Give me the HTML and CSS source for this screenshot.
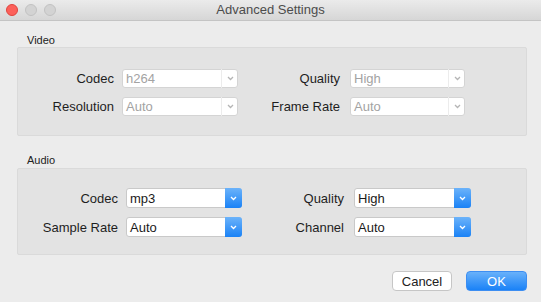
FILE: index.html
```html
<!DOCTYPE html>
<html lang="en">
<head>
    <meta charset="UTF-8">
    <title>Advanced Settings</title>
    <link rel="stylesheet" href="styles.css">
</head>
<body>
    <div class="window">
        <header class="titlebar">
            <div class="lights">
                <span class="light close"></span>
                <span class="light off"></span>
                <span class="light off"></span>
            </div>
            <h1>Advanced Settings</h1>
            <div></div>
        </header>

        <main class="content">
            <h2 class="section-title">Video</h2>
            <div class="group video">
                <label>Codec</label>
                <div class="select disabled"><span>h264</span><i class="arrow"><svg width="7" height="5" viewBox="0 0 7 5"><path d="M1 1l2.5 2.5L6 1"/></svg></i></div>
                <label>Quality</label>
                <div class="select disabled"><span>High</span><i class="arrow"><svg width="7" height="5" viewBox="0 0 7 5"><path d="M1 1l2.5 2.5L6 1"/></svg></i></div>
                <label>Resolution</label>
                <div class="select disabled"><span>Auto</span><i class="arrow"><svg width="7" height="5" viewBox="0 0 7 5"><path d="M1 1l2.5 2.5L6 1"/></svg></i></div>
                <label>Frame Rate</label>
                <div class="select disabled"><span>Auto</span><i class="arrow"><svg width="7" height="5" viewBox="0 0 7 5"><path d="M1 1l2.5 2.5L6 1"/></svg></i></div>
            </div>

            <h2 class="section-title audio-title">Audio</h2>
            <div class="group audio">
                <label>Codec</label>
                <div class="select"><span>mp3</span><i class="arrow"><svg width="7" height="5" viewBox="0 0 7 5"><path d="M1 1l2.5 2.5L6 1"/></svg></i></div>
                <label>Quality</label>
                <div class="select"><span>High</span><i class="arrow"><svg width="7" height="5" viewBox="0 0 7 5"><path d="M1 1l2.5 2.5L6 1"/></svg></i></div>
                <label>Sample Rate</label>
                <div class="select"><span>Auto</span><i class="arrow"><svg width="7" height="5" viewBox="0 0 7 5"><path d="M1 1l2.5 2.5L6 1"/></svg></i></div>
                <label>Channel</label>
                <div class="select"><span>Auto</span><i class="arrow"><svg width="7" height="5" viewBox="0 0 7 5"><path d="M1 1l2.5 2.5L6 1"/></svg></i></div>
            </div>

            <div class="actions">
                <button class="btn">Cancel</button>
                <button class="btn btn-primary">OK</button>
            </div>
        </main>
    </div>
</body>
</html>
```

FILE: styles.css
```css
* {
    margin: 0;
    padding: 0;
    box-sizing: border-box;
    font-family: 'Helvetica Neue', 'Liberation Sans', Arial, sans-serif;
}

body {
    background-color: #ececec;
    width: 541px;
    height: 302px;
    overflow: hidden;
}

.window {
    height: 302px;
    background-color: #ececec;
}

.titlebar {
    height: 21px;
    display: grid;
    grid-template-columns: 1fr auto 1fr;
    align-items: center;
    background: linear-gradient(#ebebeb, #d6d6d6);
    border-bottom: 1px solid #c4c4c4;
}

.titlebar h1 {
    font-size: 13px;
    font-weight: 400;
    color: #4c4c4c;
    line-height: 20px;
}

.lights {
    display: flex;
    gap: 7px;
    padding-left: 6px;
}

.light {
    width: 12px;
    height: 12px;
    border-radius: 50%;
    background-color: #d3d3d3;
    border: 1px solid #c2c2c2;
}

.light.close {
    background-color: #fc605a;
    border-color: #e0443e;
}

.content {
    padding: 0 14px 0 17px;
}

.section-title {
    font-size: 11px;
    font-weight: 400;
    line-height: 13px;
    color: #222;
    margin: 13px 0 0 10px;
}

.audio-title {
    margin-top: 18px;
    margin-bottom: 1px;
}

.group {
    display: grid;
    align-items: center;
    row-gap: 9px;
    background-color: #e3e3e3;
    border: 1px solid #dadada;
    border-radius: 2px;
}

.group.video {
    grid-template-columns: 104px 116px 112px 115px;
    grid-auto-rows: 19px;
    padding: 21px 0 19px 0;
}

.group.audio {
    grid-template-columns: 108px 116px 112px 117px;
    grid-auto-rows: 20px;
    padding: 19px 0 17px 0;
}

.group label {
    font-size: 13px;
    color: #1e1e1e;
    text-align: right;
    padding-right: 8px;
}

.group label:nth-of-type(even) {
    padding-right: 10px;
}

.select {
    height: 100%;
    display: flex;
    align-items: center;
    background-color: #fff;
    border: 1px solid #c9c9c9;
    border-radius: 3px;
    font-size: 13px;
    color: #1a1a1a;
}

.select span {
    flex: 1;
    padding-left: 3px;
}

.select .arrow {
    width: 17px;
    height: calc(100% + 2px);
    margin: -1px -1px -1px 0;
    display: flex;
    align-items: center;
    justify-content: center;
    background: linear-gradient(#6cb3fa, #1a82f6);
    border-radius: 0 3px 3px 0;
}

.select .arrow path {
    fill: none;
    stroke: #fff;
    stroke-width: 1.3;
}

.select.disabled {
    color: #a3a3a3;
    border-color: #d4d4d4;
}

.select.disabled .arrow {
    background: none;
    border-left: 1px solid #ececec;
}

.select.disabled .arrow path {
    stroke: #b5b5b5;
}

.actions {
    display: flex;
    justify-content: flex-end;
    gap: 14px;
    margin-top: 16px;
}

.btn {
    height: 20px;
    font-size: 13px;
    border-radius: 4px;
    background-color: #fff;
    border: 1px solid #c6c6c6;
    color: #222;
    width: 60px;
}

.btn-primary {
    width: 61px;
    background: linear-gradient(#69b1fa, #1a82f7);
    border-color: #3d8ef2;
    color: #fff;
}
```
